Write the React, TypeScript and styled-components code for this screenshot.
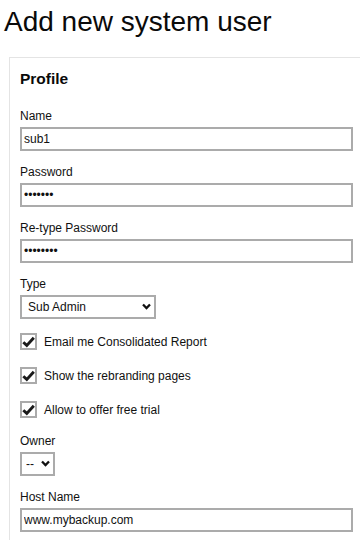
import React from "react";
import styled, { createGlobalStyle } from "styled-components";

const GlobalStyle = createGlobalStyle`
  html, body {
    margin: 0;
    padding: 0;
    background: #ffffff;
    overflow: hidden;
  }
  body {
    font-family: "Liberation Sans", Arial, sans-serif;
    color: #111111;
  }
  * { box-sizing: border-box; }
`;

const Page = styled.div`
  width: 360px;
  height: 540px;
  overflow: hidden;
  padding: 6px 0 0 4px;
`;

const Title = styled.h1`
  margin: 0 0 19px 0;
  font-size: 28px;
  line-height: 32px;
  font-weight: normal;
  color: #0a0a0a;
  white-space: nowrap;
`;

const Panel = styled.section`
  margin-left: 5px;
  width: 380px;
  border: 1px solid #e4e4e4;
  padding: 12px 10px 20px 10px;
`;

const PanelHeading = styled.h2`
  margin: 0 0 21px 0;
  font-size: 15.5px;
  line-height: 18px;
  font-weight: bold;
  color: #0a0a0a;
`;

const Field = styled.div`
  display: flex;
  flex-direction: column;
  align-items: flex-start;
  margin-bottom: 14px;
`;

const Label = styled.label`
  display: block;
  font-size: 12px;
  line-height: 15px;
  margin-bottom: 3px;
  color: #111111;
`;

const TextInput = styled.input`
  width: 333px;
  height: 24px;
  border: 2px solid #ababab;
  border-radius: 0;
  padding: 0 2px;
  font-family: "Liberation Sans", Arial, sans-serif;
  font-size: 12px;
  color: #111111;
  background: #ffffff;
  outline: none;
`;

const SelectWrap = styled.div<{ $width: number }>`
  position: relative;
  width: ${(p) => p.$width}px;
  height: 24px;
`;

const Select = styled.select<{ $padLeft: number }>`
  appearance: none;
  -webkit-appearance: none;
  width: 100%;
  height: 100%;
  border: 2px solid #ababab;
  border-radius: 0;
  padding: 0 0 0 ${(p) => p.$padLeft}px;
  font-family: "Liberation Sans", Arial, sans-serif;
  font-size: 12px;
  color: #111111;
  background: #ffffff;
  outline: none;
`;

const Chevron = styled.svg`
  position: absolute;
  right: 5px;
  top: 8px;
  width: 9px;
  height: 7px;
  pointer-events: none;
`;

const CheckList = styled.div`
  display: flex;
  flex-direction: column;
  gap: 17px;
  margin-bottom: 16px;
`;

const CheckRow = styled.label`
  display: flex;
  align-items: center;
  gap: 7px;
  height: 17px;
  font-size: 12px;
  color: #111111;
`;

const Box = styled.span`
  position: relative;
  width: 17px;
  height: 17px;
  border: 2px solid #ababab;
  background: #ffffff;
  flex: none;
  display: flex;
  align-items: center;
  justify-content: center;
`;

const HiddenCheck = styled.input`
  position: absolute;
  opacity: 0;
  margin: 0;
  width: 100%;
  height: 100%;
`;

const CheckMark = styled.svg`
  width: 13px;
  height: 13px;
`;

function ChevronIcon() {
  return (
    <Chevron viewBox="0 0 9 7">
      <path d="M1 1.5 L4.5 5 L8 1.5" fill="none" stroke="#111" strokeWidth="2.3" />
    </Chevron>
  );
}

function Check({ label }: { label: string }) {
  return (
    <CheckRow>
      <Box>
        <HiddenCheck type="checkbox" defaultChecked />
        <CheckMark viewBox="0 0 13 13">
          <path d="M1.3 7.2 L4.8 10.4 L11.8 2.8" fill="none" stroke="#1a1a1a" strokeWidth="2.9" strokeLinejoin="miter" />
        </CheckMark>
      </Box>
      {label}
    </CheckRow>
  );
}

export default function App() {
  return (
    <>
      <GlobalStyle />
      <Page>
        <Title>Add new system user</Title>
        <Panel>
          <PanelHeading>Profile</PanelHeading>
          <Field>
            <Label>Name</Label>
            <TextInput type="text" defaultValue="sub1" />
          </Field>
          <Field>
            <Label>Password</Label>
            <TextInput type="password" defaultValue="1234567" />
          </Field>
          <Field>
            <Label>Re-type Password</Label>
            <TextInput type="password" defaultValue="12345678" />
          </Field>
          <Field>
            <Label>Type</Label>
            <SelectWrap $width={136}>
              <Select $padLeft={6} defaultValue="sub">
                <option value="sub">Sub Admin</option>
                <option value="admin">Admin</option>
              </Select>
              <ChevronIcon />
            </SelectWrap>
          </Field>
          <CheckList>
            <Check label="Email me Consolidated Report" />
            <Check label="Show the rebranding pages" />
            <Check label="Allow to offer free trial" />
          </CheckList>
          <Field>
            <Label>Owner</Label>
            <SelectWrap $width={35}>
              <Select $padLeft={4} defaultValue="none">
                <option value="none">--</option>
              </Select>
              <ChevronIcon />
            </SelectWrap>
          </Field>
          <Field>
            <Label>Host Name</Label>
            <TextInput type="text" defaultValue="www.mybackup.com" />
          </Field>
        </Panel>
      </Page>
    </>
  );
}
